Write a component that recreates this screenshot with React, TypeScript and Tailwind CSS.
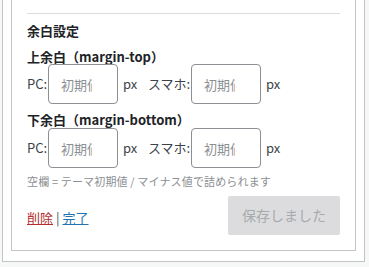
import React from 'react';

const font = { fontFamily: '"Noto Sans CJK JP", "Noto Sans", sans-serif' };

const SpacingInput = () => (
    <input
        type="number"
        placeholder="初期値"
        className="w-[70px] h-[40px] border border-[#8c8f94] rounded-[4px] pl-[12px] pr-[10px] text-[13px] text-[#2c3338] placeholder:text-[#8c8f94] bg-white outline-none"
    />
);

const SpacingRow = () => (
    <div className="flex items-center text-[13px] text-[#3c434a]">
        <span className="w-[21px]">PC:</span>
        <SpacingInput />
        <span className="ml-[5px] w-[25px]">px</span>
        <span className="w-[43px]">スマホ:</span>
        <SpacingInput />
        <span className="ml-[5px]">px</span>
    </div>
);

export default function App() {
    return (
        <div className="w-[369px] h-[267px] bg-[#f6f7f7] overflow-hidden" style={font}>
            <div className="ml-[2px] w-[363px] bg-white border border-t-0 border-[#c3c4c7] px-[8px] pb-[10px]">
                <div className="border border-t-0 border-[#c3c4c7] px-[15px] pt-[13px] pb-[15px]">
                    <div className="h-px bg-[#dcdcde]" />

                    <div className="mt-[8px] text-[13px] leading-[18px] font-bold text-[#1d2327]">余白設定</div>

                    <div className="mt-[10px] text-[13px] leading-[14px] font-bold text-[#1d2327]">上余白（margin-top）</div>
                    <div className="mt-0"><SpacingRow /></div>

                    <div className="mt-[9px] text-[13px] leading-[14px] font-bold text-[#1d2327]">下余白（margin-bottom）</div>
                    <div className="mt-[1px]"><SpacingRow /></div>

                    <p className="mt-[6px] text-[11px] leading-[14px] tracking-[0.15px] text-[#8c8f94]">空欄 = テーマ初期値 / マイナス値で詰められます</p>

                    <div className="mt-[8px] flex items-center justify-between">
                        <div className="text-[13px] pt-[5px] text-[#50575e]">
                            <a href="#" className="text-[#b32d2e] underline">削除</a>
                            <span className="mx-[3px]">|</span>
                            <a href="#" className="text-[#2271b1] underline">完了</a>
                        </div>
                        <button disabled className="w-[112px] h-[39px] bg-[#dcdcde] text-[#a7aaad] text-[14px] rounded-[2px]">保存しました</button>
                    </div>
                </div>
            </div>
        </div>
    );
}
